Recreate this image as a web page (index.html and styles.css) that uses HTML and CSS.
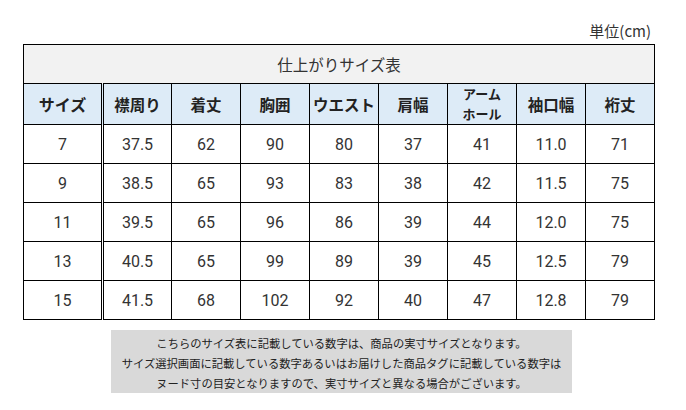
FILE: index.html
```html
<!DOCTYPE html>
<html lang="ja">
<head>
<meta charset="utf-8">
<link rel="stylesheet" href="styles.css">
</head>
<body>
<div class="page">
  <div class="unit">単位(cm)</div>
  <table class="size-table">
    <colgroup>
      <col class="c-first">
      <col class="c"><col class="c"><col class="c"><col class="c">
      <col class="c"><col class="c"><col class="c"><col class="c">
    </colgroup>
    <tr class="title-row"><td colspan="9">仕上がりサイズ表</td></tr>
    <tr class="head-row">
      <th class="first">サイズ</th>
      <th>襟周り</th>
      <th>着丈</th>
      <th>胸囲</th>
      <th>ウエスト</th>
      <th>肩幅</th>
      <th class="two">アーム<br>ホール</th>
      <th>袖口幅</th>
      <th>裄丈</th>
    </tr>
    <tr><td class="first">7</td><td>37.5</td><td>62</td><td>90</td><td>80</td><td>37</td><td>41</td><td>11.0</td><td>71</td></tr>
    <tr><td class="first">9</td><td>38.5</td><td>65</td><td>93</td><td>83</td><td>38</td><td>42</td><td>11.5</td><td>75</td></tr>
    <tr><td class="first">11</td><td>39.5</td><td>65</td><td>96</td><td>86</td><td>39</td><td>44</td><td>12.0</td><td>75</td></tr>
    <tr><td class="first">13</td><td>40.5</td><td>65</td><td>99</td><td>89</td><td>39</td><td>45</td><td>12.5</td><td>79</td></tr>
    <tr><td class="first">15</td><td>41.5</td><td>68</td><td>102</td><td>92</td><td>40</td><td>47</td><td>12.8</td><td>79</td></tr>
  </table>
  <div class="note">
    <p>こちらのサイズ表に記載している数字は、商品の実寸サイズとなります。</p>
    <p>サイズ選択画面に記載している数字あるいはお届けした商品タグに記載している数字は</p>
    <p>ヌード寸の目安となりますので、実寸サイズと異なる場合がございます。</p>
  </div>
</div>
</body>
</html>
```
FILE: styles.css
```css
html, body {
  margin: 0;
  padding: 0;
  background: #fff;
}
body {
  font-family: "Noto Sans CJK JP", "Noto Sans", sans-serif;
  color: #333;
}
.page {
  width: 686px;
  padding: 21px 0 0 23px;
  box-sizing: border-box;
}
.unit {
  width: 628px;
  text-align: right;
  font-size: 15px;
  line-height: 20px;
  height: 23px;
  color: #333;
}
.size-table {
  border-collapse: collapse;
  table-layout: fixed;
  width: 631px;
}
.c-first { width: 79px; }
.c { width: 69px; }
.size-table td, .size-table th {
  border: 1px solid #000;
  text-align: center;
  vertical-align: middle;
  padding: 0;
  height: 38px;
}
.title-row td {
  background: #f2f2f2;
  font-size: 15.5px;
  font-weight: 400;
  color: #333;
}
.head-row th {
  background: #ddebf7;
  font-size: 15.5px;
  font-weight: 700;
  color: #222;
}
.head-row th.first {
  font-size: 16px;
}
.head-row th.two {
  font-size: 13px;
  line-height: 20px;
}
.size-table .first {
  border-right: 3px double #000;
}
.size-table tr td {
  font-family: Roboto, "Liberation Sans", sans-serif;
  font-size: 16px;
  color: #333;
}
.size-table .title-row td {
  font-family: "Noto Sans CJK JP", sans-serif;
  font-size: 15.5px;
}
.note {
  margin: 10px 0 0 88px;
  width: 461px;
  height: 63px;
  background: #d9d9d9;
  box-sizing: border-box;
  padding-top: 3px;
  text-align: center;
  font-size: 11.3px;
  line-height: 20px;
  color: #222;
}
.note p {
  margin: 0;
  white-space: nowrap;
}
```
